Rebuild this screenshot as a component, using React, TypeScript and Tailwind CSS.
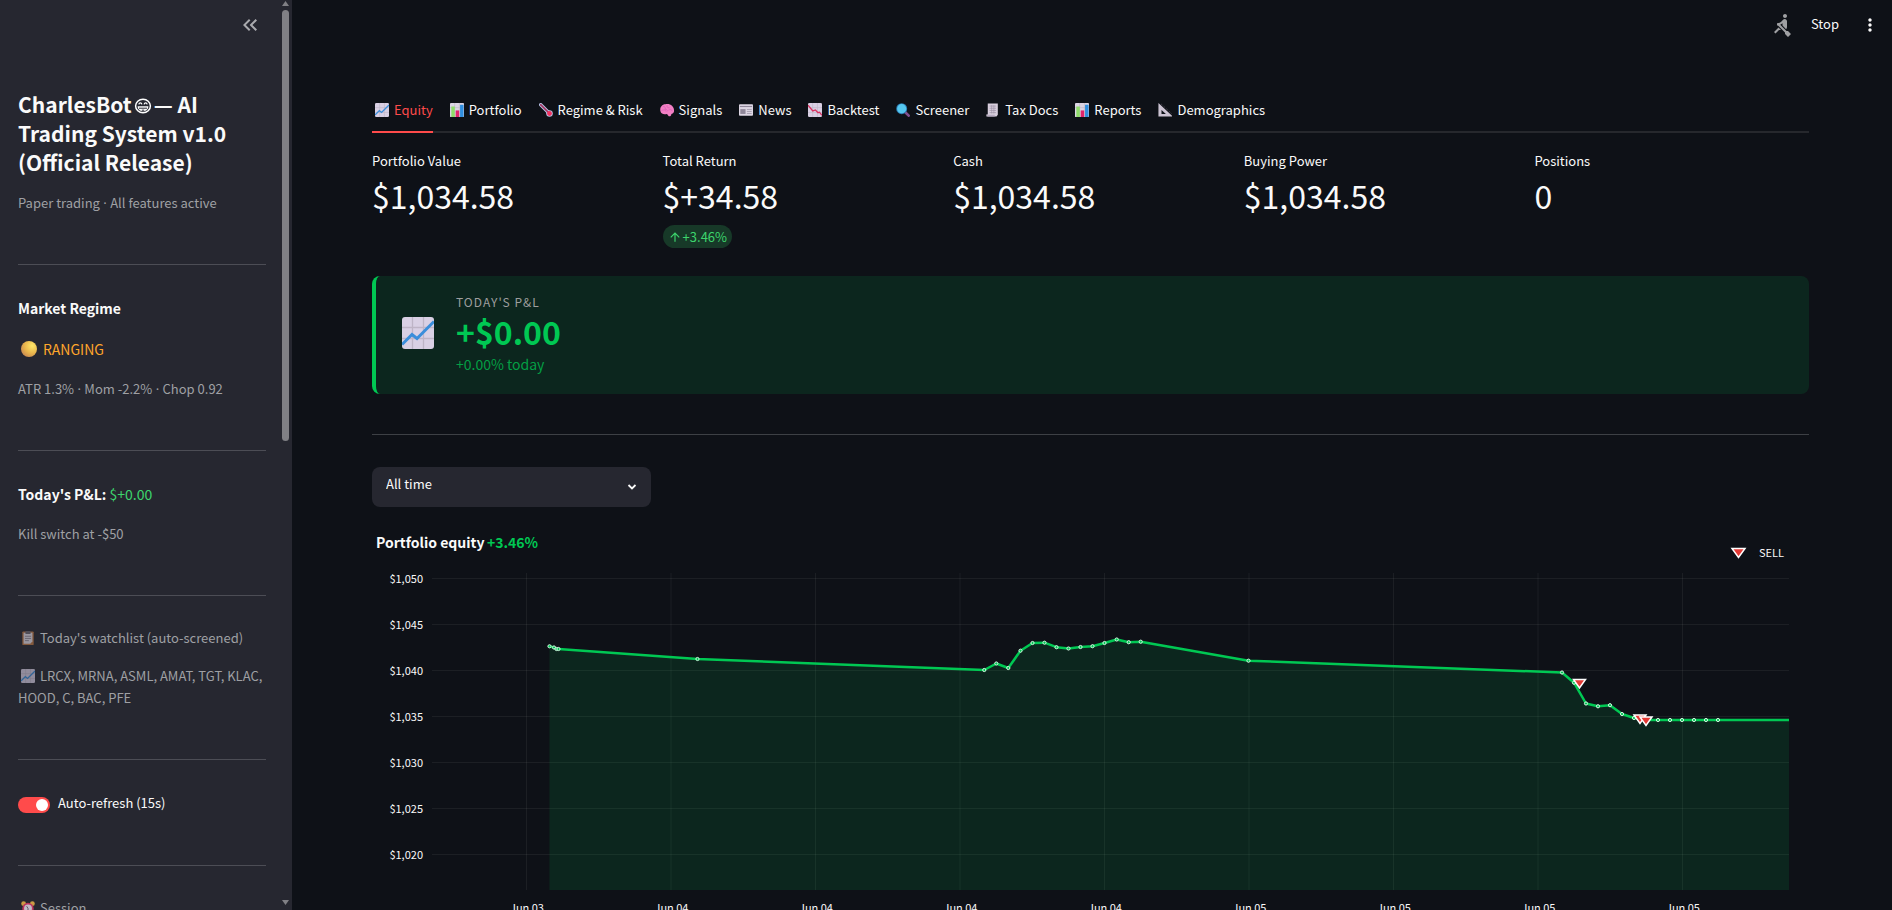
import React from "react";
import {
  MdArrowUpward,
  MdKeyboardDoubleArrowLeft,
  MdMoreVert,
  MdRowing,
} from "react-icons/md";

type IconProps = { className?: string };

const ChartUpIcon = ({ className }: IconProps) => (
  <svg viewBox="0 0 32 32" className={className} aria-hidden="true">
    <rect width="32" height="32" rx="3" fill="#d9d0e4" />
    <path d="M10.5 0v32M21.5 0v32M0 10.5h32M0 21.5h32" stroke="#beb4c6" strokeWidth="1.3" />
    <path d="M0 27.5L10 17.5l5 4L32 4.5" stroke="#3a8edb" strokeWidth="3" fill="none" />
  </svg>
);

const ChartDownIcon = ({ className }: IconProps) => (
  <svg viewBox="0 0 32 32" className={className} aria-hidden="true">
    <rect width="32" height="32" rx="3" fill="#d9d0e4" />
    <path d="M10.5 0v32M21.5 0v32M0 10.5h32M0 21.5h32" stroke="#beb4c6" strokeWidth="1.3" />
    <path d="M0 5l11 13 6-2 6 6 3-1 6 7" stroke="#d9305f" strokeWidth="3" fill="none" />
  </svg>
);

const BarsIcon = ({ className }: IconProps) => (
  <svg viewBox="0 0 32 32" className={className} aria-hidden="true">
    <rect width="32" height="32" rx="2" fill="#dcd5e4" />
    <path d="M10.5 0v32M21.5 0v32M0 10.5h32" stroke="#beb4c6" strokeWidth="1.3" />
    <rect x="3" y="8" width="8" height="24" fill="#8fdc6a" />
    <rect x="13" y="17" width="8" height="15" fill="#e0246c" />
    <rect x="23" y="4" width="8" height="28" fill="#2f8fe0" />
  </svg>
);

const ThermometerIcon = ({ className }: IconProps) => (
  <svg viewBox="0 0 32 32" className={className} aria-hidden="true">
    <path d="M4 4l20 20" stroke="#b9c3e6" strokeWidth="8" strokeLinecap="round" />
    <circle cx="24" cy="24" r="7.5" fill="#b9c3e6" />
    <path d="M4 4l20 20" stroke="#a0305c" strokeWidth="4" strokeLinecap="round" />
    <circle cx="24" cy="24" r="5.5" fill="#f4315f" />
  </svg>
);

const BrainIcon = ({ className }: IconProps) => (
  <svg viewBox="0 0 32 32" className={className} aria-hidden="true">
    <path
      d="M1 19C-1 11 4 3 12 3c10-3 20 4 20 13 1 6-3 9-6 9 0 4-3 6-6 5l-4-5c-6 2-13 1-15-6z"
      fill="#f27fc4"
    />
    <path
      d="M8 8c4 0 5 3 4 6M16 6c-1 4 2 5 5 5M4 17c4-3 9-1 10 2M20 16c3-2 7-1 8 2M12 14c3 0 5 2 5 4"
      stroke="#d65bb4"
      strokeWidth="1.5"
      fill="none"
      strokeLinecap="round"
    />
  </svg>
);

const NewspaperIcon = ({ className }: IconProps) => (
  <svg viewBox="0 0 32 32" className={className} aria-hidden="true">
    <rect y="3" width="32" height="26" rx="2" fill="#ddd6e3" />
    <path d="M2 8h28" stroke="#8f8799" strokeWidth="2.5" />
    <rect x="3" y="14" width="12" height="11" fill="#8f8799" />
    <path d="M18 15h11M18 19.5h11M18 24h11" stroke="#a49cad" strokeWidth="2" />
  </svg>
);

const MagnifierIcon = ({ className }: IconProps) => (
  <svg viewBox="0 0 32 32" className={className} aria-hidden="true">
    <path d="M20 20l9 9" stroke="#81508f" strokeWidth="6" strokeLinecap="round" />
    <circle cx="13" cy="13" r="12.5" fill="#2c7db5" />
    <circle cx="13" cy="13" r="10.5" fill="#55c8f0" />
  </svg>
);

const ReceiptIcon = ({ className }: IconProps) => (
  <svg viewBox="0 0 32 32" className={className} aria-hidden="true">
    <path d="M4 1h23v26l-3 4H1v-5h3z" fill="#d8cfdd" />
    <path d="M8 7h15M8 12h15M8 17h15M8 22h15M13 5v19M18 5v19" stroke="#9c91a5" strokeWidth="1.5" />
    <path d="M1 27h19v4H4z" fill="#b8acc1" />
  </svg>
);

const TriangleRulerIcon = ({ className }: IconProps) => (
  <svg viewBox="0 0 32 32" className={className} aria-hidden="true">
    <path d="M1 0l31 29v2H1zM8 16v9h10z" fill="#cbc3d2" fillRule="evenodd" />
    <path d="M7 2l25 23" stroke="#7e7687" strokeWidth="1.5" strokeDasharray="2 3" />
  </svg>
);

const ClipboardIcon = ({ className }: IconProps) => (
  <svg viewBox="0 0 32 32" className={className} aria-hidden="true">
    <rect x="3" y="1" width="26" height="31" rx="2" fill="#c27b45" />
    <path d="M6 4h20v20l-5 5H6z" fill="#e8e2ec" />
    <rect x="10" y="0" width="12" height="7" rx="2" fill="#6d6873" />
    <path d="M9 12h14M9 17h14M9 22h9" stroke="#8d8694" strokeWidth="2" />
  </svg>
);

const AlarmIcon = ({ className }: IconProps) => (
  <svg viewBox="0 0 32 32" className={className} aria-hidden="true">
    <circle cx="6" cy="6" r="5.5" fill="#f5b84a" />
    <circle cx="26" cy="6" r="5.5" fill="#f5b84a" />
    <circle cx="16" cy="17" r="13" fill="#e0386c" />
    <circle cx="16" cy="17" r="9" fill="#e9e2ee" />
    <path d="M13 12l3 5v5" stroke="#5c5266" strokeWidth="2" fill="none" />
  </svg>
);

const GrinIcon = ({ className }: IconProps) => (
  <svg viewBox="0 0 18 16" className={className} aria-hidden="true">
    <ellipse cx="9" cy="8" rx="7.4" ry="6.8" stroke="#fff" strokeWidth="1.5" fill="none" />
    <path
      d="M4.8 6.3c.5-2 2.6-2 3.1 0M10.1 6.3c.5-2 2.6-2 3.1 0"
      stroke="#fff"
      strokeWidth="1.3"
      fill="none"
    />
    <path d="M3.6 8.3h10.8c0 3-2.2 4.9-5.4 4.9s-5.4-1.9-5.4-4.9z" fill="#fff" />
    <path d="M5 10.2h8M7.8 12.2h2.4" stroke="#262730" strokeWidth="1" />
  </svg>
);

const CoinIcon = ({ className }: IconProps) => (
  <svg viewBox="0 0 16 16" className={className} aria-hidden="true">
    <defs>
      <radialGradient id="coin" cx="0.7" cy="0.3" r="0.8">
        <stop offset="0" stopColor="#ffe768" />
        <stop offset="0.6" stopColor="#e8b44c" />
        <stop offset="1" stopColor="#c98a52" />
      </radialGradient>
    </defs>
    <circle cx="8" cy="8" r="8" fill="url(#coin)" />
  </svg>
);

const tabs = [
  { name: "Equity", Icon: ChartUpIcon },
  { name: "Portfolio", Icon: BarsIcon },
  { name: "Regime & Risk", Icon: ThermometerIcon },
  { name: "Signals", Icon: BrainIcon },
  { name: "News", Icon: NewspaperIcon },
  { name: "Backtest", Icon: ChartDownIcon },
  { name: "Screener", Icon: MagnifierIcon },
  { name: "Tax Docs", Icon: ReceiptIcon },
  { name: "Reports", Icon: BarsIcon },
  { name: "Demographics", Icon: TriangleRulerIcon },
];

const metrics = [
  { label: "Portfolio Value", value: "$1,034.58" },
  { label: "Total Return", value: "$+34.58", delta: "+3.46%" },
  { label: "Cash", value: "$1,034.58" },
  { label: "Buying Power", value: "$1,034.58" },
  { label: "Positions", value: "0" },
];

// x, y on the chart canvas
const equity: [number, number][] = [
  [177.5, 123.3],
  [182, 124.5],
  [184.5, 126],
  [186.5, 126],
  [325.5, 136],
  [612.3, 147],
  [624.3, 140.5],
  [636.3, 145],
  [648.5, 127.7],
  [660.5, 120],
  [672.5, 119.7],
  [684.5, 124.2],
  [696.5, 125.5],
  [708.5, 124],
  [720.5, 123.2],
  [732.5, 120],
  [744.7, 116.5],
  [756.7, 119.2],
  [768.7, 118.7],
  [876.5, 137.7],
  [1190, 149.5],
  [1202, 159.7],
  [1214, 180.5],
  [1226, 183.3],
  [1238, 182.2],
  [1250, 191],
  [1262, 195],
  [1274, 197],
  [1286, 197],
  [1298, 197],
  [1310, 197],
  [1322, 197],
  [1334, 197],
  [1346, 197],
];

const sells = [
  [1207.5, 160],
  [1268, 195.5],
  [1274, 197.5],
];

const yTicks = ["$1,050", "$1,045", "$1,040", "$1,035", "$1,030", "$1,025", "$1,020"];
const xTicks = [
  "Jun 03",
  "Jun 04",
  "Jun 04",
  "Jun 04",
  "Jun 04",
  "Jun 05",
  "Jun 05",
  "Jun 05",
  "Jun 05",
];

const SellMarker = ({ x, y }: { x: number; y: number }) => (
  <path
    d={`M${x - 6} ${y - 3.5}h12l-6 8.5z`}
    fill="#e53935"
    stroke="#fff"
    strokeWidth="1.5"
  />
);

const EquityChart = () => {
  const line = equity.map((p) => p.join(",")).join(" L") + " L1417,197";

  return (
    <svg viewBox="0 0 1437 420" className="mt-4 block w-full" role="img" aria-label="Portfolio equity">
      <text x="4" y="25" fontSize="14" fontWeight="700" fill="#fafafa">
        Portfolio equity
      </text>
      <text x="115" y="25" fontSize="14" fontWeight="700" fill="#00c853">
        +3.46%
      </text>

      {yTicks.map((tick, i) => (
        <g key={tick}>
          <path d={`M60 ${55.5 + i * 46}H1417`} stroke="#fff" strokeOpacity="0.06" />
          <text x="51" y={60 + i * 46} fontSize="11" textAnchor="end" fill="#fafafa">
            {tick}
          </text>
        </g>
      ))}
      {xTicks.map((tick, i) => (
        <g key={i}>
          <path d={`M${154.5 + i * 144.5} 50V367`} stroke="#fff" strokeOpacity="0.06" />
          <text x={155 + i * 144.5} y="389" fontSize="11" textAnchor="middle" fill="#fafafa">
            {tick}
          </text>
        </g>
      ))}

      <path d={`M${line}V367H177.5z`} fill="#00c853" fillOpacity="0.12" />
      <path d={`M${line}`} fill="none" stroke="#00c853" strokeWidth="2.5" strokeLinejoin="round" />
      {equity.map(([x, y]) => (
        <circle key={x} cx={x} cy={y} r="1.6" fill="#00c853" stroke="#d5f5e2" strokeWidth="1" />
      ))}
      {sells.map(([x, y]) => (
        <SellMarker key={x} x={x} y={y} />
      ))}

      <path d="M1360 25.5h13l-6.5 9z" fill="#e53935" stroke="#fff" strokeWidth="1.5" />
      <text x="1387" y="34" fontSize="11" fill="#fafafa">
        SELL
      </text>
    </svg>
  );
};

const Divider = () => <hr className="mt-[50px] mb-[31px] border-[#4c4d55]" />;

const Dot = () => <span className="font-['Noto_Sans']"> · </span>;

const Sidebar = () => {
  const [autoRefresh, setAutoRefresh] = React.useState<boolean>(true);

  return (
    <aside className="flex w-[292px] shrink-0 bg-[#262730]">
      <div className="flex-1 overflow-hidden pl-[18px]">
        <div className="flex h-[90px] justify-end pt-[13px] pr-[17px]">
          <button className="h-6 text-[#a9aaae]" aria-label="Collapse sidebar">
            <MdKeyboardDoubleArrowLeft size={24} />
          </button>
        </div>

        <div className="w-[248px]">
          <h1 className="text-[21px] leading-[29px] font-bold">
            CharlesBot
            <GrinIcon className="mx-[2px] inline-block h-4 w-[18px] align-[-1px]" />
            — AI Trading System v1.0 (Official Release)
          </h1>
          <p className="mt-[15px] text-[13px] leading-[22px] text-[#9fa0a4]">
            Paper trading
            <Dot />
            All features active
          </p>
          <Divider />

          <div className="flex flex-col gap-[17px]">
            <p className="text-sm leading-6 font-bold">Market Regime</p>
            <p className="flex items-center gap-[6px] pl-[3px] text-sm leading-6 text-[#ffa62b]">
              <CoinIcon className="size-4" />
              RANGING
            </p>
            <p className="text-[13px] leading-[22px] text-[#9fa0a4]">
              ATR 1.3%
              <Dot />
              Mom -2.2%
              <Dot />
              Chop 0.92
            </p>
          </div>
          <Divider />

          <div className="flex flex-col gap-[17px]">
            <p className="text-sm leading-6">
              <span className="font-bold">Today's P&L:</span>{" "}
              <span className="text-[#3dd56d]">$+0.00</span>
            </p>
            <p className="text-[13px] leading-[22px] text-[#9fa0a4]">Kill switch at -$50</p>
          </div>
          <Divider />

          <div className="flex flex-col gap-4 text-[13px] leading-[22px] text-[#9fa0a4]">
            <p className="flex items-center gap-[5px] pl-[3px]">
              <ClipboardIcon className="size-[14px] opacity-60" />
              Today's watchlist (auto-screened)
            </p>
            <p>
              <ChartUpIcon className="mr-[5px] ml-[3px] inline-block size-[14px] align-[-2px] opacity-60" />
              LRCX, MRNA, ASML, AMAT, TGT, KLAC, HOOD, C, BAC, PFE
            </p>
          </div>
          <Divider />

          <label className="flex h-6 gap-2 text-[13px] leading-6">
            <input
              type="checkbox"
              role="switch"
              checked={autoRefresh}
              onChange={() => setAutoRefresh(!autoRefresh)}
              className="mt-[6px] flex h-4 w-8 appearance-none items-center rounded-full bg-[#5a5b63] px-[2px] before:size-3 before:rounded-full before:bg-white checked:justify-end checked:bg-[#ff4b4b]"
            />
            Auto-refresh (15s)
          </label>
          <Divider />

          <p className="flex items-center gap-[5px] pl-[3px] text-[13px] leading-[22px] text-[#9fa0a4]">
            <AlarmIcon className="size-[14px] opacity-80" />
            Session
          </p>
        </div>
      </div>

      <div className="flex h-full w-[13px] flex-col items-center px-[3px] pt-px pb-[5px]" aria-hidden="true">
        <svg viewBox="0 0 7 5" className="h-[5px] w-[7px]">
          <path d="M3.5 0L7 5H0z" fill="#808085" />
        </svg>
        <div className="mt-1 h-[431px] w-[7px] rounded-full bg-[#808085]" />
        <svg viewBox="0 0 7 5" className="mt-auto h-[5px] w-[7px]">
          <path d="M0 0h7L3.5 5z" fill="#808085" />
        </svg>
      </div>
    </aside>
  );
};

const App = () => {
  const [activeTab, setActiveTab] = React.useState<string>("Equity");

  return (
    <div className="flex h-screen overflow-hidden bg-[#0e1117] font-['Noto_Sans_CJK_KR','Noto_Sans_CJK_JP',sans-serif] text-[#fafafa]">
      <Sidebar />

      <div className="min-w-0 flex-1">
        <header className="flex h-[50px] items-center justify-end pr-3">
          <MdRowing size={24} className="mr-[17px] text-[#9fa0a3]" />
          <button className="mr-[21px] pb-[2px] text-[13px]">Stop</button>
          <button aria-label="Main menu">
            <MdMoreVert size={20} />
          </button>
        </header>

        <main className="pt-[38px] pr-[83px] pl-20">
          <nav className="flex gap-[14px] border-b-2 border-[#26282d]">
            {tabs.map(({ name, Icon }) => (
              <button
                key={name}
                onClick={() => setActiveTab(name)}
                className={`-mb-[2px] flex h-[45px] items-center gap-[5px] border-b-2 pl-[3px] text-[13px] whitespace-nowrap ${
                  activeTab === name ? "border-[#ff4b4b] text-[#ff4b4b]" : "border-transparent"
                }`}
              >
                <Icon className="size-[14px]" />
                {name}
              </button>
            ))}
          </nav>

          <div className="mt-[17px] grid h-[98px] grid-cols-5 gap-4">
            {metrics.map((item) => (
              <div key={item.label}>
                <p className="text-[13px] leading-[22px]">{item.label}</p>
                <p className="text-[32px] leading-[46px]">{item.value}</p>
                {item.delta && (
                  <p className="mt-[7px] flex h-[23px] w-fit items-center gap-px rounded-full bg-[#173928] px-[5px] text-[13px] text-[#3dd56d]">
                    <MdArrowUpward size={14} />
                    {item.delta}
                  </p>
                )}
              </div>
            ))}
          </div>

          <section className="mt-7 flex items-center rounded-lg border-l-4 border-[#00c853] bg-[#00c853]/12 py-4 pl-[26px]">
            <ChartUpIcon className="mb-1 size-8" />
            <div className="ml-[22px]">
              <p className="text-xs leading-5 tracking-[1px] text-[#9e9e9e]">TODAY'S P&L</p>
              <p className="text-[32px] leading-[38px] font-bold text-[#00c853]">+$0.00</p>
              <p className="text-sm leading-7 text-[#00c853]/75">+0.00% today</p>
            </div>
          </section>

          <hr className="mt-10 mb-8 border-[#3d4045]" />

          <div className="relative w-[279px]">
            <select
              aria-label="Time range"
              className="block h-10 w-full appearance-none rounded-lg bg-[#262730] pb-[6px] pl-[14px] text-[13px]"
            >
              <option>All time</option>
            </select>
            <svg
              viewBox="0 0 10 10"
              className="pointer-events-none absolute top-[15px] right-[14px] size-[10px]"
              aria-hidden="true"
            >
              <path d="M1.5 3L5 6.5 8.5 3" stroke="#fafafa" strokeWidth="1.8" fill="none" />
            </svg>
          </div>

          <EquityChart />
        </main>
      </div>
    </div>
  );
};

export default App;
